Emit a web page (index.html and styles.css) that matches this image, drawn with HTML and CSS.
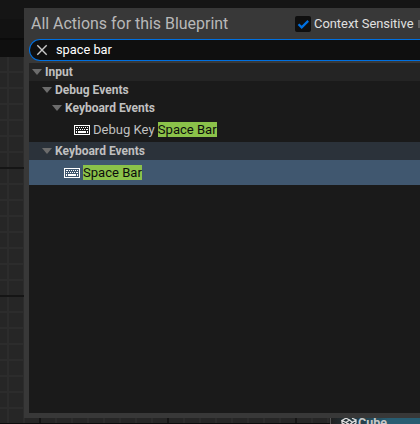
FILE: index.html
```
<!DOCTYPE html>
<html lang="en">
<head>
<meta charset="utf-8">
<title>Blueprint Actions</title>
<link rel="stylesheet" href="styles.css">
</head>
<body>
<svg width="0" height="0" class="defs" aria-hidden="true">
  <symbol id="keyboard" viewBox="0 0 16 10">
    <path fill="currentColor" fill-rule="evenodd" d="M0 0H16V10H0ZM1 1V9H15V1Z"/>
    <path fill="currentColor" d="M2 2h2v1H2zM5 2h1v1H5zM7 2h1v1H7zM9 2h1v1H9zM11 2h1v1h-1zM13 2h1v1h-1zM2 4h1v1H2zM4 4h1v1H4zM6 4h1v1H6zM8 4h1v1H8zM10 4h1v1h-1zM12 4h2v1h-2zM2 6h1v2H2zM4 6h8v2H4zM13 6h1v2h-1z"/>
  </symbol>
</svg>
<div class="editor">
  <div class="toolbar"></div>
  <div class="crumbs"></div>
  <div class="graph"></div>
  <div class="node">
    <svg width="16" height="14" viewBox="0 0 16 14"><path d="M5 1.2L8.5 3L5 5.5L1 3.5ZM11 1.2L15 3L11.5 5.5L8.5 3M1 3.5V6L5 8L8 6.5M11.5 5.5L8 8L5 5.5M15 3V6L11.5 8.5" fill="none" stroke="#ddd" stroke-width="1.3"/></svg>
    <span>Cube</span>
  </div>
  <div class="edge"></div>
</div>
<main class="panel">
  <header class="head">
    <h1>All Actions for this Blueprint</h1>
    <div class="context">
      <span class="check"><svg width="16" height="16" viewBox="0 0 16 16"><path d="M3.5 8.2L6.7 11.4L13.2 4.9" fill="none" stroke="#0070e0" stroke-width="2.2"/></svg></span>
      <span>Context Sensitive</span>
      <i class="arrow"></i>
    </div>
  </header>
  <div class="search">
    <svg width="12" height="12" viewBox="0 0 12 12"><path d="M1.3 1.3L10.7 10.7M10.7 1.3L1.3 10.7" stroke="#c8c8c8" stroke-width="1.4"/></svg>
    <span>space bar</span>
  </div>
  <div class="list">
    <div class="row group root"><i class="tri"></i><span>Input</span></div>
    <div class="row group l1"><i class="tri"></i><span>Debug Events</span></div>
    <div class="row group l2"><i class="tri"></i><span>Keyboard Events</span></div>
    <div class="row leaf deep"><svg class="key" width="16" height="10"><use href="#keyboard"/></svg><span>Debug Key <mark>Space Bar</mark></span></div>
    <div class="row group l1 parent"><i class="tri"></i><span>Keyboard Events</span></div>
    <div class="row leaf selected"><svg class="key" width="16" height="10"><use href="#keyboard"/></svg><span><mark>Space Bar</mark></span></div>
  </div>
</main>
</body>
</html>
```
FILE: styles.css
```
* { box-sizing: border-box; }
body {
  margin: 0;
  width: 420px;
  height: 424px;
  overflow: hidden;
  background: #151515;
  color: #c0c0c0;
  font: 13.05px/18px Roboto, sans-serif;
}
.defs { position: absolute; }
.editor {
  position: absolute;
  inset: 0;
  display: flex;
  flex-direction: column;
}
.toolbar { height: 19px; background: #151515; }
.crumbs {
  height: 38px;
  background: linear-gradient(#121212 0 19px, #0b0b0b 19px 21px, #0f0f0f 21px);
}
.graph {
  flex: 1;
  background:
    linear-gradient(#151515, #151515) 0 110px / 100% 2px no-repeat,
    linear-gradient(#151515, #151515) 0 238px / 100% 2px no-repeat,
    repeating-linear-gradient(90deg, transparent 0 39px, #151515 39px 41px, transparent 41px 128px),
    repeating-linear-gradient(transparent 0 14px, #2c2c2c 14px 16px),
    repeating-linear-gradient(90deg, transparent 0 7px, #2c2c2c 7px 9px, transparent 9px 16px),
    #262626;
}
.edge { height: 1px; background: #0c0c0c; }
.node {
  position: absolute;
  left: 330px;
  top: 418px;
  width: 90px;
  height: 6px;
  overflow: hidden;
  display: flex;
  gap: 1px;
  padding-left: 10px;
  background: linear-gradient(90deg, #202020, #285d72 65%);
  border-left: 1px solid #555;
  color: #c8c8c8;
  font-size: 12.5px;
  font-weight: 700;
}
.node svg { margin-top: -1px; }
.node span { margin-top: -4px; }
.panel {
  position: absolute;
  left: 24px;
  top: 8px;
  width: 396px;
  height: 410px;
  padding: 0 0 5px 5px;
  display: flex;
  flex-direction: column;
  overflow: hidden;
  background: #383838;
}
.head {
  height: 31px;
  padding-left: 2px;
  display: flex;
  align-items: center;
}
h1 {
  margin: 0;
  flex: 0 0 264px;
  color: #b8b8b8;
  font-size: 15.95px;
  line-height: 31px;
  font-weight: 400;
  white-space: nowrap;
}
.context {
  flex: 1;
  min-width: 0;
  display: flex;
  align-items: center;
  gap: 3px;
  color: #e0e0e0;
  font-size: 12.9px;
  white-space: nowrap;
}
.check {
  width: 16px;
  height: 16px;
  border-radius: 2px;
  background: #0f0f0f;
}
.check svg { display: block; }
.arrow { flex: 1; height: 8px; margin-left: 2px; background: #606060; }
.search {
  height: 22px;
  margin-bottom: 2px;
  padding-left: 6px;
  display: flex;
  align-items: center;
  gap: 8px;
  border: 1px solid #0070e0;
  border-right: 0;
  border-radius: 11px 0 0 11px;
  background: #0f0f0f;
  color: #fff;
  font-size: 12.8px;
}
.list { flex: 1; background: #1a1a1a; }
.row { display: flex; align-items: center; white-space: nowrap; }
.group {
  height: 18px;
  padding-left: 3px;
  gap: 3px;
  font-size: 12px;
  font-weight: 700;
}
.root { background: #242424; }
.l1 { padding-left: 13px; }
.l2 { padding-left: 23px; }
.parent { background: #2b323a; }
.tri {
  width: 10px;
  height: 6px;
  background: #6c6c6c;
  clip-path: polygon(0 0, 100% 0, 50% 100%);
}
.leaf { height: 25px; padding-left: 35px; gap: 3px; }
.deep { padding-left: 45px; }
.selected { background: #40576f; }
.key { margin-top: 1px; color: #fff; }
mark { display: inline-block; height: 15px; line-height: 15px; background: #8bc24a; color: #0c0c0c; }
```
